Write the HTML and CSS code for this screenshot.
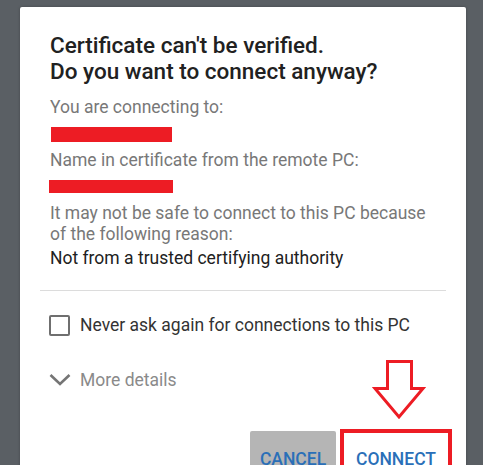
FILE: index.html
```html
<!DOCTYPE html>
<html>
<head>
<meta charset="utf-8">
<link rel="stylesheet" href="styles.css">
</head>
<body>
<div class="dialog">
  <div class="content">
    <h1 class="title">Certificate can't be verified.<br>Do you want to connect anyway?</h1>
    <div class="label label-first">You are connecting to:</div>
    <div class="redact redact-1"></div>
    <div class="label">Name in certificate from the remote PC:</div>
    <div class="redact redact-2"></div>
    <div class="label label-reason">It may not be safe to connect to this PC because of the following reason:</div>
    <div class="reason">Not from a trusted certifying authority</div>
  </div>
  <div class="divider"></div>
  <div class="options">
    <label class="check-row">
      <span class="checkbox"></span>
      <span class="check-text">Never ask again for connections to this PC</span>
    </label>
    <div class="more-row">
      <svg class="chevron" width="22" height="14" viewBox="0 0 22 14"><path d="M1.5 2 L11 11 L20.5 2" fill="none" stroke="#757575" stroke-width="2.6"/></svg>
      <span class="more-text">More details</span>
    </div>
  </div>
  <div class="actions">
    <button class="btn btn-cancel">CANCEL</button>
    <button class="btn btn-connect">CONNECT</button>
    <div class="mark-box"></div>
    <svg class="mark-arrow" width="54" height="62" viewBox="0 0 54 62"><path d="M15.5 1.5 H39.5 V28.5 H51 L27 57 L3 28.5 H15.5 Z" fill="none" stroke="#ed1c24" stroke-width="3"/></svg>
  </div>
</div>
</body>
</html>
```
FILE: styles.css
```css
html, body {
  margin: 0;
  padding: 0;
  height: 100%;
  overflow: hidden;
}
body {
  background: #5a5f64;
  font-family: Roboto, "Noto Sans", Arial, sans-serif;
  padding: 7px 0 0 20px;
  box-sizing: border-box;
}
.dialog {
  width: 446px;
  height: 520px;
  background: #ffffff;
  border-radius: 2px;
  box-shadow: 0 0 3px rgba(0,0,0,0.25);
  display: flex;
  flex-direction: column;
}
.content {
  padding: 25px 30px 0 30px;
  display: flex;
  flex-direction: column;
}
.title {
  margin: 0;
  font-size: 22.5px;
  font-weight: 500;
  line-height: 26px;
  color: #212121;
}
.label {
  font-size: 17.5px;
  line-height: 21px;
  color: #787878;
  margin-top: 8.5px;
}
.label-first {
  margin-top: 13px;
}
.label-reason {
  margin-top: 10.5px;
}
.redact {
  height: 15px;
  background: #ed1c24;
  margin-top: 8.5px;
}
.redact-1 { width: 121px; margin-left: 1px; }
.redact-2 { width: 124px; height: 13px; margin-left: -1px; }
.reason {
  font-size: 17.5px;
  line-height: 21px;
  color: #212121;
  margin-top: 3px;
}
.divider {
  height: 1px;
  background: #dcdcdc;
  margin: 20.5px 20px 0 20px;
}
.options {
  padding: 0 29px;
  display: flex;
  flex-direction: column;
}
.check-row {
  display: flex;
  align-items: center;
  gap: 10px;
  margin-top: 24px;
  height: 21px;
}
.checkbox {
  width: 17px;
  height: 17px;
  border: 2px solid #6f6f6f;
  border-radius: 2px;
  flex: none;
}
.check-text {
  font-size: 17.5px;
  color: #333333;
}
.more-row {
  display: flex;
  align-items: center;
  gap: 9px;
  margin-top: 34px;
  height: 21px;
}
.chevron { flex: none; }
.more-text {
  font-size: 17.5px;
  color: #8a8a8a;
}
.actions {
  position: relative;
  display: flex;
  justify-content: flex-end;
  gap: 8px;
  padding: 0 18px 0 0;
  margin-top: 40.5px;
}
.btn {
  border: none;
  font-family: Roboto, "Noto Sans", Arial, sans-serif;
  font-size: 17.5px;
  font-weight: 500;
  color: #2a6fb8;
  height: 44px;
  padding: 12px 0 0 0;
  border-radius: 2px;
  background: transparent;
}
.btn-cancel {
  background: #b5b5b5;
  width: 86px;
}
.btn-connect {
  width: 104px;
  margin-right: 0;
}
.mark-box {
  position: absolute;
  left: 320px;
  top: -2px;
  width: 104px;
  height: 60px;
  border: 4px solid #ed1c24;
}
.mark-arrow {
  position: absolute;
  left: 352px;
  top: -71px;
}
```
